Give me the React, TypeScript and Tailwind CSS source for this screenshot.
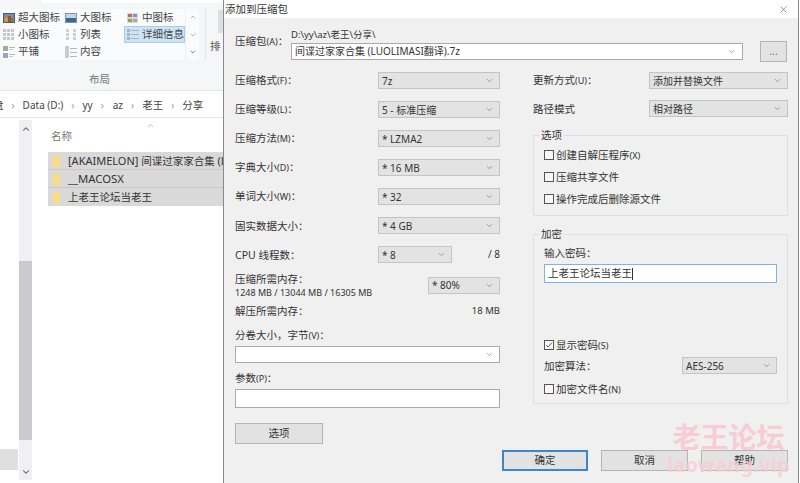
import type { ReactNode } from 'react';
import { ChevronDown, ChevronUp, X } from 'lucide-react';

const FONT = '"Noto Sans", "Noto Sans CJK SC", sans-serif';

// Mnemonic suffix like (F) renders smaller than the CJK text in the original.
function Label({ text, hint, suffix = '' }: { text: string; hint?: string; suffix?: string }) {
  return (
    <span className="block whitespace-nowrap text-[10.5px] leading-[14px] text-[#333]">
      {text}
      {hint && <span className="text-[9px]">{hint}</span>}
      {suffix}
    </span>
  );
}

function Select({ value, className }: { value?: string; className: string }) {
  return (
    <div className={`flex h-[17px] items-center justify-between border border-[#c4c4c4] bg-[#e3e3e3] pl-[3px] pr-[5px] text-[10px] text-[#333] ${className}`}>
      <span className="whitespace-nowrap leading-none">{value}</span>
      <ChevronDown size={9} strokeWidth={1.5} className="text-[#666]" />
    </div>
  );
}

function FieldRow({ label, hint, value }: { label: string; hint?: string; value: string }) {
  return (
    <div className="flex h-[17px] items-center justify-between">
      <Label text={label} hint={hint} suffix="：" />
      <Select value={value} className="w-[122px]" />
    </div>
  );
}

function Check({ label, hint, checked }: { label: string; hint?: string; checked?: boolean }) {
  return (
    <div className="flex h-[14px] items-center gap-[2px]">
      <span className="flex h-[10px] w-[10px] items-center justify-center border border-[#555] bg-[#f7f7f7]">
        {checked && (
          <svg viewBox="0 0 10 10" className="h-[8px] w-[8px]" fill="none" stroke="#444" strokeWidth="1.1">
            <path d="M1.5 5 4 7.5 8.5 2" />
          </svg>
        )}
      </span>
      <Label text={label} hint={hint} />
    </div>
  );
}

function Group({ title, className, children }: { title: string; className: string; children: ReactNode }) {
  return (
    <div className={`relative rounded-[1px] border border-[#dfdfdf] ${className}`}>
      <span className="absolute left-[5px] top-[-8px] bg-[#f0f0f0] px-[2px] text-[10.5px] leading-[14px] text-[#333]">{title}</span>
      {children}
    </div>
  );
}

function Btn({ label, primary, className = '' }: { label: string; primary?: boolean; className?: string }) {
  return (
    <button
      type="button"
      className={`flex h-[21px] items-center justify-center bg-[#e2e2e2] text-[10.5px] text-[#333] ${primary ? 'border-2 border-[#3b87c8]' : 'border border-[#b5b5b5]'} ${className}`}
    >
      {label}
    </button>
  );
}

function ViewIcon({ kind }: { kind: 'xl' | 'lg' | 'md' | 'sm' | 'list' | 'detail' | 'tile' | 'content' }) {
  if (kind === 'xl') {
    return (
      <svg viewBox="0 0 12 10" className="h-[10px] w-[12px]">
        <rect width="12" height="10" fill="#4a5a78" />
        <rect x="1" y="1" width="10" height="8" fill="#7f8da8" />
        <rect x="2" y="5" width="3" height="4" fill="#c9a227" />
        <rect x="5" y="3" width="3" height="6" fill="#b5452f" />
        <rect x="8" y="5" width="2" height="4" fill="#4f8f3c" />
      </svg>
    );
  }
  if (kind === 'lg') {
    return (
      <svg viewBox="0 0 12 10" className="h-[10px] w-[12px]">
        <rect width="12" height="10" fill="#7d93ad" />
        <rect x="1" y="1" width="10" height="4" fill="#bcd8ee" />
        <rect x="1" y="5" width="10" height="4" fill="#3d6a8c" />
      </svg>
    );
  }
  if (kind === 'md') {
    return (
      <svg viewBox="0 0 11 10" className="h-[10px] w-[11px]">
        <rect width="11" height="10" fill="#d8d8d8" />
        <rect x="1" y="1" width="4" height="3" fill="#c06a4f" />
        <rect x="6" y="1" width="4" height="3" fill="#7f9cb8" />
        <rect x="1" y="6" width="4" height="3" fill="#8aa36b" />
        <rect x="6" y="6" width="4" height="3" fill="#a9a9a9" />
      </svg>
    );
  }
  if (kind === 'sm') {
    return (
      <svg viewBox="0 0 12 12" className="h-[12px] w-[12px]" fill="#c4c8cc">
        {[0, 4, 8].map((y) => [0, 4, 8].map((x) => <rect key={`${x}-${y}`} x={x} y={y} width="3" height="3" />))}
      </svg>
    );
  }
  if (kind === 'list') {
    return (
      <svg viewBox="0 0 12 12" className="h-[12px] w-[12px]" fill="#cdd0d3">
        {[0, 4, 8].map((y) => [1, 8].map((x) => <rect key={`${x}-${y}`} x={x} y={y} width="3" height="3" />))}
      </svg>
    );
  }
  if (kind === 'detail') {
    return (
      <svg viewBox="0 0 12 12" className="h-[12px] w-[12px]" fill="#aab4be">
        {[1, 5, 9].map((y) => (
          <g key={y}>
            <rect x="0" y={y - 1} width="3" height="3" />
            <rect x="4" y={y} width="8" height="1" />
          </g>
        ))}
      </svg>
    );
  }
  if (kind === 'tile') {
    return (
      <svg viewBox="0 0 12 12" className="h-[12px] w-[12px]">
        <rect x="0" y="0" width="5" height="5" fill="#9fb08c" />
        <rect x="0" y="7" width="5" height="5" fill="#8fa9bd" />
        <rect x="6" y="1" width="6" height="1" fill="#b5b5b5" />
        <rect x="6" y="3" width="4" height="1" fill="#c9c9c9" />
        <rect x="6" y="8" width="6" height="1" fill="#b5b5b5" />
        <rect x="6" y="10" width="4" height="1" fill="#c9c9c9" />
      </svg>
    );
  }
  return (
    <svg viewBox="0 0 12 12" className="h-[12px] w-[12px]">
      <rect x="0" y="0" width="4" height="12" fill="#c6ced0" />
      <rect x="5" y="2" width="7" height="1" fill="#b5b5b5" />
      <rect x="5" y="6" width="7" height="1" fill="#b5b5b5" />
      <rect x="5" y="10" width="7" height="1" fill="#b5b5b5" />
    </svg>
  );
}

function GalleryItem({ kind, label, active }: { kind: Parameters<typeof ViewIcon>[0]['kind']; label: string; active?: boolean }) {
  return (
    <div className={`flex h-[17px] items-center gap-[3px] pl-[1px] text-[10.5px] text-[#444] ${active ? 'ml-[-1px] border border-[#a6cdec] bg-[#cde4f7]' : ''}`}>
      <span className="flex w-[13px] justify-center">
        <ViewIcon kind={kind} />
      </span>
      <span className="whitespace-nowrap pt-[1px]">{label}</span>
    </div>
  );
}

function FileRow({ children }: { children: ReactNode }) {
  return (
    <div className="flex h-[18px] items-center gap-[8px] overflow-hidden border-b border-[#c9c9c9] bg-[#d9d9d9] pt-[1px] pl-[5px] text-[10.5px] whitespace-nowrap text-[#333] last:border-b-0">
      <span className="h-[11px] w-[7px] shrink-0 rounded-[1px] bg-[#fbdc80]" />
      <span>{children}</span>
    </div>
  );
}

function Crumb() {
  return <span className="text-[#999]">›</span>;
}

function Explorer() {
  return (
    <aside className="flex h-full w-[223px] shrink-0 flex-col bg-white">
      <div className="flex h-[90px] shrink-0 flex-col bg-[#f5f6f7]">
        <div className="ml-[42px] h-[3px] bg-white" />
        <div className="mt-[6px] flex h-[51px] items-stretch pl-[1px]">
          <div className="grid w-[184px] grid-cols-[62px_62px_60px] content-start bg-[#f9fbfd]">
            <GalleryItem kind="xl" label="超大图标" />
            <GalleryItem kind="lg" label="大图标" />
            <GalleryItem kind="md" label="中图标" />
            <GalleryItem kind="sm" label="小图标" />
            <GalleryItem kind="list" label="列表" />
            <GalleryItem kind="detail" label="详细信息" active />
            <GalleryItem kind="tile" label="平铺" />
            <GalleryItem kind="content" label="内容" />
          </div>
          <div className="flex w-[14px] flex-col items-center justify-between border-l border-[#eceef0] bg-[#f9fbfd] py-[4px] text-[#999]">
            <ChevronUp size={8} />
            <ChevronDown size={8} />
            <ChevronDown size={8} className="text-[#555]" />
          </div>
          <div className="ml-[6px] flex border-l border-[#e4e4e4] pl-[4px]">
            <span className="mt-[30px] whitespace-nowrap text-[10.5px] leading-[14px] text-[#555]">排</span>
            <span className="mt-[1px] ml-[-3px] h-[23px] w-[5px] bg-[#dcdfe2]" />
          </div>
        </div>
        <div className="mt-[12px] w-[199px] text-center text-[10.5px] leading-[14px] text-[#777]">布局</div>
      </div>
      <div className="flex h-[28px] shrink-0 items-center gap-[8px] overflow-hidden border-y border-[#e4e4e4] pt-[3px] text-[10px] whitespace-nowrap text-[#444]">
        <span className="ml-[-7px] text-[10.5px]">盘</span>
        <Crumb />
        <span>Data (D:)</span>
        <Crumb />
        <span>yy</span>
        <Crumb />
        <span className="ml-[1px]">az</span>
        <Crumb />
        <span className="text-[10.5px]">老王</span>
        <Crumb />
        <span className="text-[10.5px]">分享</span>
      </div>
      <div className="flex min-h-0 flex-1">
        <div className="relative w-[19px] shrink-0">
          <div className="absolute top-[331px] left-0 h-[21px] w-[18px] bg-[#dfdfdf]" />
        </div>
        <div className="mt-[2px] mb-[3px] flex w-[13px] shrink-0 flex-col items-center bg-[#f0f0f2] text-[#555]">
          <ChevronUp size={10} strokeWidth={2.5} className="mt-[4px]" />
          <div className="mt-[127px] h-[179px] w-full bg-[#cbcbcd]" />
          <ChevronDown size={10} strokeWidth={2.5} className="mt-[27px]" />
        </div>
        <div className="flex min-w-0 flex-1 flex-col pl-[16px]">
          <div className="relative h-[34px] shrink-0">
            <ChevronUp size={9} className="absolute top-[3px] left-[98px] text-[#aaa]" />
            <span className="absolute top-[11px] left-[3px] text-[10.5px] leading-[14px] text-[#777]">名称</span>
          </div>
          <FileRow>
            <span className="text-[11px]">[AKAIMELON]</span> 间谍过家家合集 <span className="text-[11px]">(LUOLIMASI翻译)</span>
          </FileRow>
          <FileRow>
            <span className="text-[11.3px]">__MACOSX</span>
          </FileRow>
          <FileRow>上老王论坛当老王</FileRow>
        </div>
      </div>
    </aside>
  );
}

function Dialog() {
  return (
    <section className="relative mr-[1px] flex h-full min-w-0 flex-1 flex-col border-x border-[#8a8a8a] bg-[#f0f0f0]">
      <header className="flex h-[18px] shrink-0 items-center justify-between bg-white pt-[2px] pr-[9px] pl-[1px] text-[10.5px] text-[#333]">
        添加到压缩包
        <X size={11} strokeWidth={1.2} className="mt-[-2px] text-[#444]" />
      </header>
      <div className="flex flex-col pr-[10px] pl-[11px]">
        <div className="mt-[10px] flex h-[34px] items-start">
          <div className="w-[56px] pt-[6px]">
            <Label text="压缩包" hint="(A)" suffix="：" />
          </div>
          <div className="flex w-[452px] flex-col">
            <span className="flex h-[15px] items-center text-[9.5px] whitespace-nowrap text-[#333]">D:\yy\az\老王\分享\</span>
            <div className="flex h-[17px] items-center justify-between border border-[#aaa] bg-white pr-[6px] pl-[3px] text-[10px] text-[#333]">
              <span>间谍过家家合集 (LUOLIMASI翻译).7z</span>
              <ChevronDown size={9} strokeWidth={1.5} className="text-[#666]" />
            </div>
          </div>
          <Btn label="..." className="mt-[13px] ml-[17px] w-[27px] text-[#777]" />
        </div>
        <div className="mt-[10px] flex gap-[33px]">
          <div className="flex w-[265px] shrink-0 flex-col">
            <div className="flex flex-col gap-[12px]">
              <FieldRow label="压缩格式" hint="(F)" value="7z" />
              <FieldRow label="压缩等级" hint="(L)" value="5 - 标准压缩" />
              <FieldRow label="压缩方法" hint="(M)" value="* LZMA2" />
              <FieldRow label="字典大小" hint="(D)" value="* 16 MB" />
              <FieldRow label="单词大小" hint="(W)" value="* 32" />
              <FieldRow label="固实数据大小" value="* 4 GB" />
              <div className="flex h-[17px] items-center">
                <div className="w-[143px]">
                  <Label text="CPU 线程数：" />
                </div>
                <Select value="* 8" className="w-[74px]" />
                <span className="ml-auto text-[10px] text-[#333]">/ 8</span>
              </div>
            </div>
            <div className="mt-[8px] flex h-[28px] items-center justify-between">
              <div className="flex flex-col">
                <Label text="压缩所需内存：" />
                <span className="text-[9px] leading-[13px] whitespace-nowrap text-[#333]">1248 MB / 13044 MB / 16305 MB</span>
              </div>
              <Select value="* 80%" className="w-[72px]" />
            </div>
            <div className="mt-[5px] flex h-[14px] items-center justify-between">
              <Label text="解压所需内存：" />
              <span className="text-[9.5px] text-[#333]">18 MB</span>
            </div>
            <div className="mt-[10px] h-[14px]">
              <Label text="分卷大小，字节" hint="(V)" suffix="：" />
            </div>
            <div className="mt-[4px] flex h-[17px] items-center justify-end border border-[#aaa] bg-white pr-[5px]">
              <ChevronDown size={9} strokeWidth={1.5} className="text-[#666]" />
            </div>
            <div className="mt-[8px] h-[14px]">
              <Label text="参数" hint="(P)" suffix="：" />
            </div>
            <div className="mt-[4px] h-[19px] border border-[#aaa] bg-white" />
            <Btn label="选项" className="mt-[15px] w-[88px]" />
          </div>
          <div className="flex w-[255px] shrink-0 flex-col">
            <div className="flex h-[17px] items-center justify-between">
              <Label text="更新方式" hint="(U)" suffix="：" />
              <Select value="添加并替换文件" className="w-[139px]" />
            </div>
            <div className="mt-[11px] flex h-[17px] items-center justify-between">
              <Label text="路径模式" />
              <Select value="相对路径" className="w-[139px]" />
            </div>
            <Group title="选项" className="mt-[18px] flex h-[81px] flex-col gap-[8px] pt-[12px] pl-[10px]">
              <Check label="创建自解压程序" hint="(X)" />
              <Check label="压缩共享文件" />
              <Check label="操作完成后删除源文件" />
            </Group>
            <Group title="加密" className="mt-[18px] flex h-[170px] flex-col pt-[11px] pr-[10px] pl-[10px]">
              <Label text="输入密码：" />
              <div className="mt-[4px] flex h-[19px] items-center border border-[#7eb4ea] bg-white pl-[3px] text-[10.5px] text-[#333]">
                上老王论坛当老王<span className="h-[12px] w-px bg-[#333]" />
              </div>
              <div className="mt-[55px]">
                <Check label="显示密码" hint="(S)" checked />
              </div>
              <div className="mt-[5px] flex h-[17px] items-center justify-between">
                <Label text="加密算法：" />
                <Select value="AES-256" className="w-[95px]" />
              </div>
              <div className="mt-[8px]">
                <Check label="加密文件名" hint="(N)" />
              </div>
            </Group>
          </div>
        </div>
        <div className="mt-[6px] flex justify-end gap-[13px]">
          <Btn label="确定" primary className="w-[86px]" />
          <Btn label="取消" className="w-[87px]" />
          <Btn label="帮助" className="w-[87px]" />
        </div>
      </div>
      {/* forum watermark stamped over the screenshot */}
      <div className="pointer-events-none absolute top-[421px] left-[446px] flex w-[117px] flex-col items-center text-[#f9cbd7]">
        <span className="text-[28px] leading-[32px] font-bold whitespace-nowrap">老王论坛</span>
        <span className="mt-[1px] text-[20px] leading-[22px] font-bold tracking-[0.2px] whitespace-nowrap opacity-75">laowang.vip</span>
      </div>
    </section>
  );
}

export default function App() {
  return (
    <div className="flex h-[483px] w-[800px] overflow-hidden bg-white" style={{ fontFamily: FONT }}>
      <Explorer />
      <Dialog />
    </div>
  );
}
